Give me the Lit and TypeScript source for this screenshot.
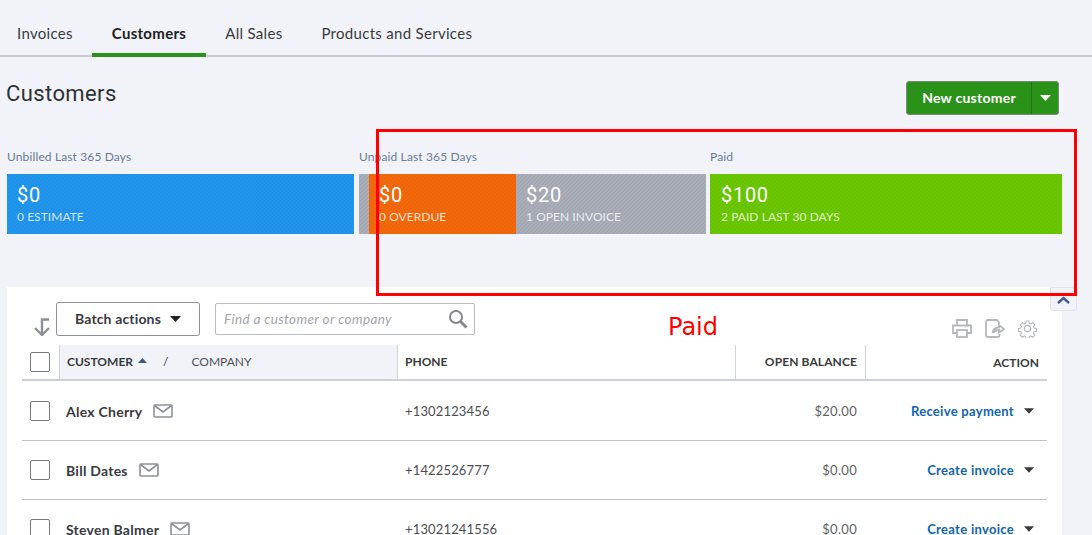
import { LitElement, html, css } from "lit";
import { customElement } from "lit/decorators.js";

const caret = html`<svg class="caret" width="11" height="6" viewBox="0 0 11 6"><path d="M0 0h11L5.500 6z" fill="currentColor"/></svg>`;
const mail = html`<svg class="mail" width="20" height="14" viewBox="0 0 20 14" fill="none" stroke="#8d9096" stroke-width="1.600"><rect x="1" y="1" width="18" height="12" rx="1"/><path d="M1.500 1.500 10 8l8.500-6.500"/></svg>`;

const rows = [
  { name: "Alex Cherry", phone: "+1302123456", bal: "$20.00", act: "Receive payment" },
  { name: "Bill Dates", phone: "+1422526777", bal: "$0.00", act: "Create invoice" },
  { name: "Steven Balmer", phone: "+13021241556", bal: "$0.00", act: "Create invoice" },
];

@customElement("app-root")
export class AppRoot extends LitElement {
  static styles = css`
    :host { display: block; position: relative; width: 1092px; height: 535px; overflow: hidden; background: #f1f3f8; font-family: Lato, "Open Sans", sans-serif; color: #393a3d; }
    .tabs { display: flex; height: 55px; border-bottom: 2px solid #c9cbd1; font-size: 15px; letter-spacing: .3px; }
    .tab { display: flex; align-items: center; height: 57px; padding: 8px 20px 0 19px; box-sizing: border-box; color: #393a3d; }
    .tab.first { padding-left: 17px; padding-right: 19px; }
    .tab.on { font-weight: 700; color: #1f2024; border-bottom: 4px solid #2b9219; padding: 12px 20px 0; letter-spacing: .3px; }
    .head { display: flex; justify-content: space-between; padding: 24px 33px 0 6px; height: 73px; box-sizing: border-box; }
    h1 { margin: 1px 0 0; font: 400 22px/24px Roboto, sans-serif; letter-spacing: .4px; color: #2f3033; }
    .newbtn { display: flex; height: 34px; border: 1px solid #7b8a78; border-radius: 3px; background: #2b9219; color: #fff; font-weight: 700; font-size: 14px; box-sizing: border-box; }
    .newbtn .l { width: 125px; display: flex; align-items: center; justify-content: center; border-right: 1px solid #1e7411; box-sizing: border-box; letter-spacing: .25px; padding-bottom: 1px; }
    .newbtn .r { width: 26px; display: flex; align-items: center; justify-content: center; }
    .strip { display: grid; grid-template-columns: 352px 351px 352px; padding: 19px 0 0 7px; }
    .col1 { padding-right: 5px; } .col2 { padding-right: 4px; }
    .lbl { font-size: 12px; line-height: 16px; height: 25px; color: #6b7a99; letter-spacing: .13px; }
    .bar { display: flex; height: 60px; color: #fff; }
    .seg { box-sizing: border-box; padding: 10px 10px 0; background-image: repeating-linear-gradient(135deg, rgba(0,0,0,.04) 0 1.414px, transparent 1.414px 2.828px); }
    .amt { font: 400 20px/23px Roboto, sans-serif; letter-spacing: .7px; }
    .sub { font-size: 12px; line-height: 14px; margin-top: 3px; color: rgba(255,255,255,.8); letter-spacing: .05px; white-space: nowrap; }
    .blue { background-color: #2196ef; flex: 1; }
    .green { background-color: #6bc800; flex: 1; padding-left: 11px; }
    .orange { background-color: #f5690a; width: 147px; }
    .gray { background-color: #a9aeb8; }
    .g1 { width: 10px; padding: 0; }
    .g2 { flex: 1; }
    .card { margin: 53px 30px 0 7px; background: #fff; padding: 15px 15px 0; height: 248px; box-sizing: border-box; overflow: hidden; }
    .tools { display: flex; align-items: flex-start; height: 43px; }
    .sort { margin: 16px 6px 0 12px; }
    .batch { width: 144px; height: 34px; box-sizing: border-box; border: 1px solid #8d9096; border-radius: 3px; display: flex; align-items: center; justify-content: center; gap: 9px; font-weight: 700; font-size: 14px; letter-spacing: .15px; padding-bottom: 1px; }
    .batch .caret { color: #1f2024; margin-top: 1px; }
    .search { margin: 1px 0 0 15px; width: 260px; height: 32px; box-sizing: border-box; border: 1px solid #b9bcc2; border-radius: 2px; display: flex; align-items: center; justify-content: space-between; padding: 0 6px 0 8px; font-style: italic; font-size: 13.500px; color: #a2a4a9; letter-spacing: .37px; }
    .icons { margin: 17px 0 0 auto; display: flex; gap: 13px; padding-right: 10px; }
    .tr { display: flex; align-items: center; }
    .th { height: 36px; box-sizing: border-box; border-bottom: 2px solid #cdd0d6; font-size: 12px; font-weight: 700; color: #393a3d; margin-bottom: 1px; }
    .td { height: 59px; box-sizing: border-box; border-bottom: 1px solid #bfc1c5; font-size: 13px; }
    .c0 { width: 37px; flex: none; padding-left: 8px; box-sizing: border-box; align-self: stretch; display: flex; align-items: center; }
    .c1 { width: 338px; flex: none; box-sizing: border-box; } .c2 { width: 338px; flex: none; box-sizing: border-box; }
    .c3 { width: 130px; flex: none; text-align: right; padding-right: 8px; box-sizing: border-box; }
    .c4 { flex: 1; display: flex; justify-content: flex-end; align-items: center; }
    .th > div { align-self: stretch; display: flex; align-items: center; box-sizing: border-box; border-left: 1px solid #d0d3d8; padding-bottom: 1px; }
    .th .c0 { border-left: 0; padding-bottom: 0; }
    .th .c1 { background: #f1f3f8; padding-left: 7px; }
    .th .c2 { padding-left: 7px; }
    .th .c3 { justify-content: flex-end; letter-spacing: .1px; }
    .th .c4 { padding-right: 8px; padding-top: 2px; }
    .asc { margin: 0 0 2px 5px; }
    .slash { margin-left: 16px; font-weight: 400; }
    .comp { margin-left: 23px; font-weight: 400; color: #4f5156; }
    .box { width: 20px; height: 20px; box-sizing: border-box; border: 1px solid #77797d; border-radius: 2px; background: #fff; }
    .name { display: flex; align-items: center; gap: 11px; padding-left: 7px; font-size: 14px; font-weight: 700; color: #393a3d; letter-spacing: .25px; }
    .td .c2 { padding-left: 8px; letter-spacing: .15px; color: #4c4d50; }
    .td .c3 { color: #5e5f63; letter-spacing: .3px; }
    .link { color: #0e64ae; font-weight: 700; letter-spacing: .3px; }
    .td .c4 { gap: 10px; padding-right: 13px; color: #393a3d; }
    .td .caret { width: 10px; }
    .red { position: absolute; left: 376px; top: 129px; width: 701px; height: 167px; box-sizing: border-box; border: 3px solid #ff0000; pointer-events: none; }
    .paid { position: absolute; left: 668px; top: 313px; font: 24px/28px "DejaVu Sans", sans-serif; color: #f00; }
    .up { position: absolute; left: 1050px; top: 287px; width: 27px; height: 24px; box-sizing: border-box; border: 1px solid #dfe4f0; border-radius: 0 0 3px 3px; background: #f1f3f8; display: flex; justify-content: center; align-items: flex-end; padding-bottom: 6px; }
  `;

  render() {
    return html`
      <div class="tabs">
        <div class="tab first">Invoices</div>
        <div class="tab on">Customers</div>
        <div class="tab">All Sales</div>
        <div class="tab">Products and Services</div>
      </div>
      <div class="head">
        <h1>Customers</h1>
        <div class="newbtn"><div class="l">New customer</div><div class="r">${caret}</div></div>
      </div>
      <div class="strip">
        <div class="col1">
          <div class="lbl">Unbilled Last 365 Days</div>
          <div class="bar"><div class="seg blue"><div class="amt">$0</div><div class="sub">0 ESTIMATE</div></div></div>
        </div>
        <div class="col2">
          <div class="lbl">Unpaid Last 365 Days</div>
          <div class="bar">
            <div class="seg gray g1"></div>
            <div class="seg orange"><div class="amt">$0</div><div class="sub">0 OVERDUE</div></div>
            <div class="seg gray g2"><div class="amt">$20</div><div class="sub">1 OPEN INVOICE</div></div>
          </div>
        </div>
        <div>
          <div class="lbl">Paid</div>
          <div class="bar"><div class="seg green"><div class="amt">$100</div><div class="sub">2 PAID LAST 30 DAYS</div></div></div>
        </div>
      </div>
      <div class="card">
        <div class="tools">
          <svg class="sort" width="16" height="18" viewBox="0 0 16 18" fill="none" stroke="#8d9096" stroke-width="2.400"><path d="M15 1.500H8V16"/><path d="M1 10l7 7 7-7" /></svg>
          <div class="batch">Batch actions ${caret}</div>
          <div class="search">Find a customer or company
            <svg width="20" height="20" viewBox="0 0 20 20" fill="none" stroke="#85878c"><circle cx="8" cy="8" r="6" stroke-width="2"/><path d="M12.500 12.500 18.500 18.500" stroke-width="3"/></svg>
          </div>
          <div class="icons">
            <svg width="20" height="19" viewBox="0 0 20 19" fill="none" stroke="#b5b7bc" stroke-width="1.800"><path d="M5 6V1h10v5"/><path d="M5 14H1V6.500h18V14h-4"/><rect x="5" y="11" width="10" height="7"/></svg>
            <svg width="20" height="19" viewBox="0 0 20 19" fill="none" stroke="#b5b7bc" stroke-width="1.800"><path d="M14 5V3.500L12 1H3a2 2 0 0 0-2 2v13a2 2 0 0 0 2 2h10a1.500 1.500 0 0 0 1.500-1.500V15"/><path d="M7.500 14c.5-3.500 3-5.500 6.500-5.500V6l5 4-5 3.500v-2.500c-2.500 0-5 1-6.500 3z"/></svg>
            <svg width="19" height="19" viewBox="0 0 24 24" fill="none" stroke="#b5b7bc" stroke-width="1.600"><circle cx="12" cy="12" r="4"/><path d="M10 1.500h4l.6 3.200 2 .9 2.700-1.800 2.900 2.900-1.800 2.700.9 2 3.200.6v4l-3.200.6-.9 2 1.800 2.700-2.900 2.900-2.700-1.800-2 .9-.6 3.200h-4l-.6-3.200-2-.9-2.700 1.800-2.900-2.900 1.800-2.700-.9-2-3.200-.6v-4l3.200-.6.9-2L2 6.700l2.900-2.900 2.700 1.800 2-.9z" transform="translate(1.200 1.200) scale(.9)"/></svg>
          </div>
        </div>
        <div class="tr th">
          <div class="c0"><div class="box"></div></div>
          <div class="c1">CUSTOMER
            <svg class="asc" width="9" height="5" viewBox="0 0 9 5"><path d="M0 5h9L4.500 0z" fill="#3f5a80"/></svg>
            <span class="slash">/</span><span class="comp">COMPANY</span></div>
          <div class="c2">PHONE</div>
          <div class="c3">OPEN BALANCE</div>
          <div class="c4">ACTION</div>
        </div>
        ${rows.map((r) => html`
          <div class="tr td">
            <div class="c0"><div class="box"></div></div>
            <div class="c1"><div class="name">${r.name} ${mail}</div></div>
            <div class="c2">${r.phone}</div>
            <div class="c3">${r.bal}</div>
            <div class="c4"><span class="link">${r.act}</span>${caret}</div>
          </div>`)}
      </div>
      <div class="up"><svg width="13" height="8" viewBox="0 0 13 8" fill="none" stroke="#3f5a9e" stroke-width="2.400"><path d="M1 7l5.500-5L12 7"/></svg></div>
      <div class="red"></div>
      <div class="paid">Paid</div>
    `;
  }
}
